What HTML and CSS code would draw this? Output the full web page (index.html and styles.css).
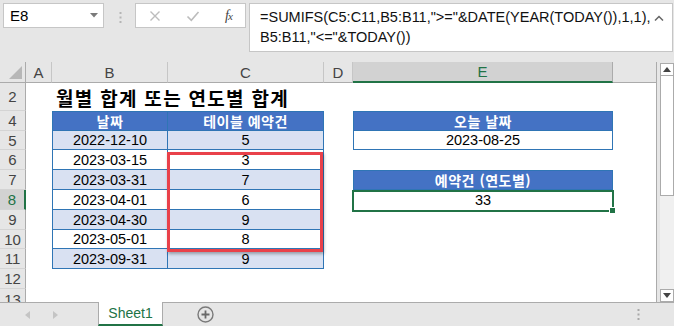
FILE: index.html
```html
<!DOCTYPE html>
<html lang="ko">
<head>
  <meta charset="UTF-8">
  <title>SUMIFS 연도별 합계</title>
  <link rel="stylesheet" href="styles.css">
</head>
<body>
  <div class="app">
    <!-- formula bar -->
    <div class="formula-bar">
      <div class="name-box">
        <span>E8</span>
        <svg class="caret" width="8" height="5" viewBox="0 0 8 5"><path d="M0 0h8L4 4.5z" fill="#7a7a7a"/></svg>
      </div>
      <svg class="grip" width="3" height="11" viewBox="0 0 3 11"><rect x="0.5" y="0" width="2" height="2" fill="#b5b5b5"/><rect x="0.5" y="4.5" width="2" height="2" fill="#b5b5b5"/><rect x="0.5" y="9" width="2" height="2" fill="#b5b5b5"/></svg>
      <div class="fx-buttons">
        <svg width="12" height="12" viewBox="0 0 12 12"><path d="M1.5 1.5l9 9M10.5 1.5l-9 9" stroke="#bcbcbc" stroke-width="1.4"/></svg>
        <svg width="14" height="12" viewBox="0 0 14 12"><path d="M1.5 6.5l3.8 3.8L12.5 2" stroke="#bcbcbc" stroke-width="1.6" fill="none"/></svg>
        <span class="fx">f<i>x</i></span>
      </div>
      <div class="formula">
        <div class="formula-text">=SUMIFS(C5:C11,B5:B11,"&gt;="&amp;DATE(YEAR(TODAY()),1,1),<br>B5:B11,"&lt;="&amp;TODAY())</div>
        <svg class="collapse" width="10" height="6" viewBox="0 0 10 6"><path d="M1 5.5L5 1.5l4 4" stroke="#666" stroke-width="1.5" fill="none"/></svg>
      </div>
    </div>

    <!-- sheet -->
    <div class="sheet-wrap">
      <div class="sheet">
        <div class="corner"></div>
        <div class="ch">A</div>
        <div class="ch">B</div>
        <div class="ch">C</div>
        <div class="ch">D</div>
        <div class="ch sel">E</div>
        <div class="ch-blank"></div>

        <div class="rh">2</div>
        <div class="c"></div>
        <div class="c title">월별 합계 또는 연도별 합계</div>
        <div class="c"></div>
        <div class="c"></div>
        <div class="c"></div>
        <div class="c edge"></div>

        <div class="rh">4</div>
        <div class="c"></div>
        <div class="tb th l">날짜</div>
        <div class="tb th">테이블 예약건</div>
        <div class="c"></div>
        <div class="tb th l">오늘 날짜</div>
        <div class="c edge"></div>

        <div class="rh">5</div>
        <div class="c"></div>
        <div class="tb band l">2022-12-10</div>
        <div class="tb band">5</div>
        <div class="c"></div>
        <div class="tb l">2023-08-25</div>
        <div class="c edge"></div>

        <div class="rh">6</div>
        <div class="c"></div>
        <div class="tb l">2023-03-15</div>
        <div class="tb">3</div>
        <div class="c"></div>
        <div class="c"></div>
        <div class="c edge"></div>

        <div class="rh">7</div>
        <div class="c"></div>
        <div class="tb band l">2023-03-31</div>
        <div class="tb band">7</div>
        <div class="c"></div>
        <div class="tb th l">예약건 (연도별)</div>
        <div class="c edge"></div>

        <div class="rh sel">8</div>
        <div class="c"></div>
        <div class="tb l">2023-04-01</div>
        <div class="tb">6</div>
        <div class="c"></div>
        <div class="c value">33</div>
        <div class="c edge"></div>

        <div class="rh">9</div>
        <div class="c"></div>
        <div class="tb band l">2023-04-30</div>
        <div class="tb band">9</div>
        <div class="c"></div>
        <div class="c"></div>
        <div class="c edge"></div>

        <div class="rh">10</div>
        <div class="c"></div>
        <div class="tb l">2023-05-01</div>
        <div class="tb">8</div>
        <div class="c"></div>
        <div class="c"></div>
        <div class="c edge"></div>

        <div class="rh">11</div>
        <div class="c"></div>
        <div class="tb band l">2023-09-31</div>
        <div class="tb band">9</div>
        <div class="c"></div>
        <div class="c"></div>
        <div class="c edge"></div>

        <div class="rh">12</div>
        <div class="c"></div>
        <div class="c"></div>
        <div class="c"></div>
        <div class="c"></div>
        <div class="c"></div>
        <div class="c edge"></div>

        <div class="rh cut">13</div>
        <div class="c"></div>
        <div class="c"></div>
        <div class="c"></div>
        <div class="c"></div>
        <div class="c"></div>
        <div class="c edge"></div>

        <!-- highlight over C6:C10 and active cell E8 -->
        <div class="highlight"></div>
        <div class="active-cell"><span class="handle"></span></div>
      </div>

      <div class="vscroll">
        <div class="sb-btn">
          <svg width="8" height="5" viewBox="0 0 8 5"><path d="M0 5h8L4 0z" fill="#444"/></svg>
        </div>
        <div class="sb-thumb"></div>
        <div class="sb-track"></div>
        <div class="sb-btn">
          <svg width="8" height="5" viewBox="0 0 8 5"><path d="M0 0h8L4 5z" fill="#444"/></svg>
        </div>
      </div>
    </div>

    <!-- sheet tabs -->
    <div class="tab-bar">
      <div class="nav">
        <svg width="5" height="8" viewBox="0 0 5 8"><path d="M5 0v8L0 4z" fill="#c4c4c4"/></svg>
        <svg width="5" height="8" viewBox="0 0 5 8"><path d="M0 0v8l5-4z" fill="#c4c4c4"/></svg>
      </div>
      <div class="tab">Sheet1</div>
      <svg class="add" width="17" height="17" viewBox="0 0 17 17"><circle cx="8.5" cy="8.5" r="7.5" stroke="#7a7a7a" stroke-width="1.4" fill="none"/><path d="M8.5 4.5v8M4.5 8.5h8" stroke="#6a6a6a" stroke-width="1.8"/></svg>
      <svg class="tab-grip" width="3" height="11" viewBox="0 0 3 11"><rect x="0.5" y="0" width="2" height="2" fill="#a8a8a8"/><rect x="0.5" y="4.5" width="2" height="2" fill="#a8a8a8"/><rect x="0.5" y="9" width="2" height="2" fill="#a8a8a8"/></svg>
    </div>
  </div>
</body>
</html>
```

FILE: styles.css
```css
body {
  margin: 0;
  background-color: #e6e6e6;
  font-family: 'Liberation Sans', 'Noto Sans CJK KR', sans-serif;
  color: #000000;
}

.app {
  width: 674px;
  height: 326px;
  overflow: hidden;
  display: flex;
  flex-direction: column;
}

/* ---------- formula bar ---------- */

.formula-bar {
  height: 62px;
  flex: none;
  display: flex;
  align-items: flex-start;
  padding: 3px 1px 0 3px;
  box-sizing: border-box;
}

.name-box {
  flex: none;
  width: 101px;
  height: 25px;
  box-sizing: border-box;
  background-color: #ffffff;
  border: 1px solid #c6c6c6;
  display: flex;
  align-items: center;
  justify-content: space-between;
  padding: 0 5px 0 6px;
  font-size: 15px;
}

.grip {
  flex: none;
  margin: 9px 13px 0 15px;
}

.fx-buttons {
  flex: none;
  width: 111px;
  height: 25px;
  box-sizing: border-box;
  background-color: #ffffff;
  border: 1px solid #c6c6c6;
  display: flex;
  align-items: center;
  gap: 25px;
  padding-left: 13px;
}

.fx {
  font-family: 'Liberation Serif', serif;
  font-style: italic;
  font-size: 14px;
  color: #444444;
  letter-spacing: -1px;
}

.fx i {
  font-size: 11px;
}

.formula {
  flex: 1;
  min-width: 0;
  height: 49px;
  margin-left: 3px;
  box-sizing: border-box;
  background-color: #ffffff;
  border: 1px solid #c6c6c6;
  display: flex;
  justify-content: space-between;
  padding: 3px 8px 0 10px;
}

.formula-text {
  font-size: 14.5px;
  line-height: 20px;
  white-space: nowrap;
  color: #111111;
}

.collapse {
  flex: none;
  margin-top: 8px;
}

/* ---------- sheet ---------- */

.sheet-wrap {
  height: 240px;
  flex: none;
  display: flex;
}

.sheet {
  position: relative;
  display: grid;
  grid-template-columns: 26px 26px 116px 156px 29px 260px 44px;
  grid-template-rows: 21px 28px 20px 19px 20px 20px 20px 20px 19px 20px 20px 13px;
  width: 657px;
  flex: none;
  overflow: hidden;
  font-size: 14.5px;
}

.corner {
  background-color: #e6e6e6;
  border-right: 1px solid #ababab;
  border-bottom: 1px solid #ababab;
  position: relative;
}

.corner::after {
  content: "";
  position: absolute;
  right: 3px;
  bottom: 3px;
  width: 13px;
  height: 13px;
  background-color: #b7b7b7;
  clip-path: polygon(100% 0, 100% 100%, 0 100%);
}

.ch {
  background-color: #e6e6e6;
  border-right: 1px solid #c6c6c6;
  border-bottom: 1px solid #ababab;
  color: #444444;
  font-size: 15px;
  display: flex;
  align-items: center;
  justify-content: center;
}

.ch.sel {
  background-color: #d2d2d2;
  color: #217346;
  border-right-color: #ababab;
  border-bottom: 2px solid #217346;
}

.ch-blank {
  border-bottom: 1px solid #ababab;
  border-right: 1px solid #ababab;
}

.rh {
  background-color: #e6e6e6;
  border-right: 1px solid #ababab;
  border-bottom: 1px solid #d4d4d4;
  color: #444444;
  font-size: 15px;
  display: flex;
  align-items: center;
  justify-content: center;
}

.rh.sel {
  background-color: #d2d2d2;
  color: #217346;
  border-right: 2px solid #217346;
}

.rh.cut {
  align-items: flex-start;
  padding-top: 2px;
  border-bottom: none;
}

.c {
  background-color: #ffffff;
}

.c.edge {
  border-right: 1px solid #ababab;
}

.title {
  font-family: 'Noto Sans CJK KR', sans-serif;
  font-weight: 700;
  font-size: 19px;
  letter-spacing: 1.3px;
  white-space: nowrap;
  padding-left: 4px;
  display: flex;
  align-items: center;
  overflow: visible;
  z-index: 1;
}

.tb {
  background-color: #ffffff;
  border-right: 1px solid #2f75b5;
  border-bottom: 1px solid #2f75b5;
  display: flex;
  align-items: center;
  justify-content: center;
}

.tb.l {
  border-left: 1px solid #2f75b5;
}

.tb.band {
  background-color: #d9e1f2;
}

.tb.th {
  background-color: #4472c4;
  border-top: 1px solid #2f75b5;
  color: #ffffff;
  font-family: 'Noto Sans CJK KR', sans-serif;
  font-weight: 700;
  font-size: 14px;
  letter-spacing: 0.5px;
}

.value {
  display: flex;
  align-items: center;
  justify-content: center;
}

.highlight {
  position: absolute;
  left: 167px;
  top: 90px;
  width: 156px;
  height: 100px;
  box-sizing: border-box;
  border: 3px solid #e9414a;
  box-shadow: 1px 2px 3px rgba(0, 0, 0, 0.3);
}

.active-cell {
  position: absolute;
  left: 352px;
  top: 128px;
  width: 262px;
  height: 22px;
  box-sizing: border-box;
  border: 2px solid #217346;
}

.handle {
  position: absolute;
  right: -4px;
  bottom: -4px;
  width: 5px;
  height: 5px;
  background-color: #217346;
  border: 1px solid #ffffff;
}

/* ---------- vertical scrollbar ---------- */

.vscroll {
  flex: 1;
  display: flex;
  flex-direction: column;
  padding: 1px 0 0 3px;
}

.sb-btn {
  height: 13px;
  flex: none;
  box-sizing: border-box;
  background-color: #ffffff;
  border: 1px solid #ababab;
  display: flex;
  align-items: center;
  justify-content: center;
}

.sb-thumb {
  height: 120px;
  flex: none;
  box-sizing: border-box;
  background-color: #ffffff;
  border: 1px solid #ababab;
  border-top: none;
}

.sb-track {
  flex: 1;
  background-color: #f0f0f0;
}

/* ---------- sheet tabs ---------- */

.tab-bar {
  flex: 1;
  border-top: 1px solid #ababab;
  display: flex;
  align-items: stretch;
  position: relative;
}

.nav {
  width: 98px;
  display: flex;
  align-items: center;
  gap: 23px;
  padding-left: 25px;
  box-sizing: border-box;
}

.tab {
  width: 65px;
  margin-top: -1px;
  box-sizing: border-box;
  background-color: #ffffff;
  border-left: 1px solid #ababab;
  border-right: 1px solid #ababab;
  border-bottom: 2px solid #217346;
  color: #217346;
  font-size: 14px;
  display: flex;
  align-items: center;
  justify-content: center;
}

.add {
  align-self: center;
  margin-left: 34px;
}

.tab-grip {
  align-self: center;
  margin-left: auto;
  margin-right: 34px;
}
```
